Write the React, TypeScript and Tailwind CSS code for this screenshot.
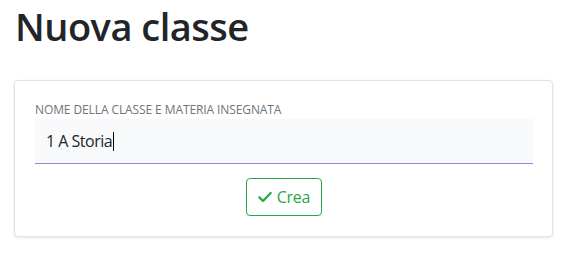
import React from "react";

export default function App() {
  return (
    <div className="min-h-[258px] w-[570px] bg-white px-[14px] font-['Open_Sans',sans-serif] text-[#212529]">
      <h1 className="pl-[1px] pt-[2px] text-[38px] font-semibold leading-[48px] tracking-[-0.5px]">Nuova classe</h1>
      <div className="mt-[30px] w-[539px] rounded-[4px] border border-[#e3e3e3] bg-white p-[20px] shadow-[0_1px_3px_rgba(0,0,0,0.1)]">
        <label className="block text-[12px] uppercase leading-[18px] tracking-[-0.1px] text-[#6c757d]">
          Nome della classe e materia insegnata
        </label>
        <div className="flex h-[45px] w-[498px] items-center border-b border-[#8c8ce0] bg-[#f8f9fa] pl-[11px]">
          <span className="text-[16px] leading-[20px] tracking-[-0.5px] text-[#212529]">1 A Storia</span>
          <span className="ml-[1px] inline-block h-[19px] w-[1px] bg-black" />
        </div>
        <div className="mt-[14px] flex justify-center">
          <button className="flex h-[38px] w-[76px] items-center justify-center gap-[4px] rounded-[4px] border border-[#28a745] text-[16px] text-[#28a745]">
            <svg width="16" height="16" viewBox="0 0 24 24" fill="none" stroke="#28a745" strokeWidth="3.4" strokeLinecap="round" strokeLinejoin="round">
              <path d="M3.5 12.5l5.5 5.5L20.5 6" />
            </svg>
            <span className="tracking-[-0.3px]">Crea</span>
          </button>
        </div>
      </div>
    </div>
  );
}
